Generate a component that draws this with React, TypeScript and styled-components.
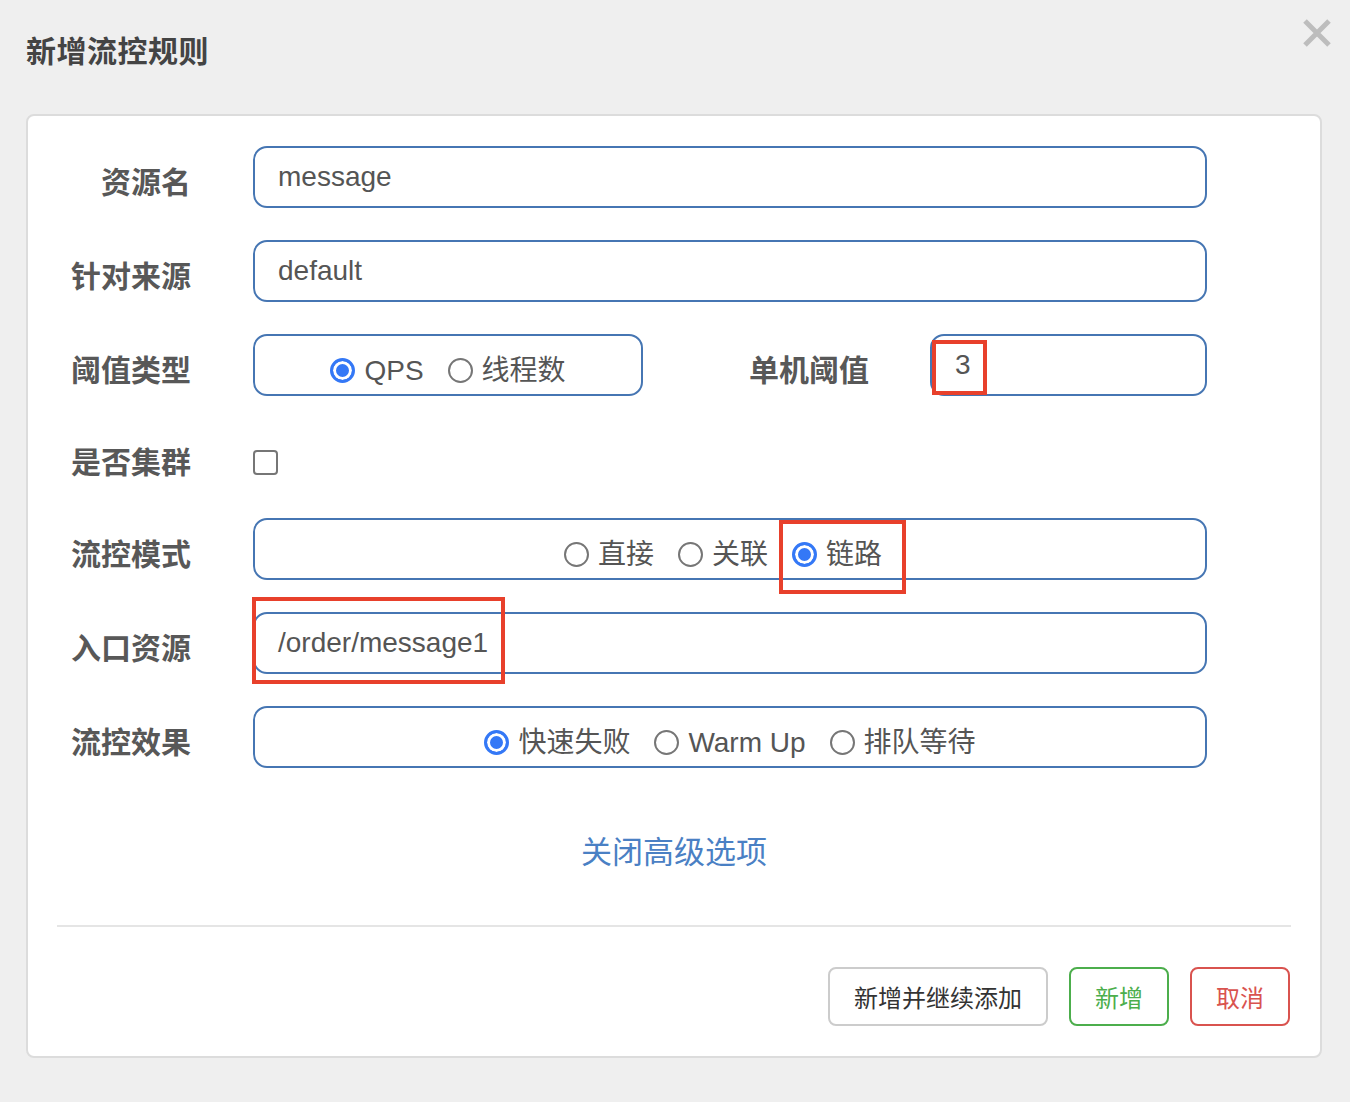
import React from "react";
import styled, { createGlobalStyle } from "styled-components";

const Global = createGlobalStyle`
  html, body { margin: 0; padding: 0; background: #efefef; }
  body { font-family: "Liberation Sans", "Noto Sans CJK SC", sans-serif; color: #555; }
  * { box-sizing: border-box; }
`;

const Page = styled.div`
  width: 1350px;
  height: 1102px;
  padding: 0 28px 0 26px;
`;

const Header = styled.div`
  height: 114px;
  display: flex;
  justify-content: space-between;
  align-items: flex-start;
  margin-right: -10px;
`;

const Title = styled.h1`
  margin: 0;
  padding-top: 29px;
  font-size: 30px;
  line-height: 40px;
  font-weight: 700;
  color: #444;
  font-family: "Noto Sans CJK SC", sans-serif;
  letter-spacing: 0.5px;
`;

const Close = styled.button`
  margin-top: 18px;
  width: 30px;
  height: 30px;
  padding: 0;
  border: 0;
  background: transparent;
  display: flex;
  align-items: center;
  justify-content: center;
`;

const Panel = styled.div`
  width: 1296px;
  height: 944px;
  background: #fff;
  border: 2px solid #dcdcdc;
  border-radius: 8px;
  display: flex;
  flex-direction: column;
`;

const Form = styled.div`
  padding-top: 30px;
  display: flex;
  flex-direction: column;
  gap: 32px;
`;

const Row = styled.div<{ $h?: number; $pt?: number }>`
  display: flex;
  align-items: ${(p) => (p.$pt ? "flex-start" : "center")};
  height: ${(p) => p.$h ?? 62}px;
  padding-top: ${(p) => p.$pt ?? 0}px;
`;

const Label = styled.div<{ $w?: number; $pr?: number }>`
  width: ${(p) => p.$w ?? 225}px;
  flex: none;
  padding-right: ${(p) => p.$pr ?? 62}px;
  text-align: right;
  font-family: "Noto Sans CJK SC", sans-serif;
  font-weight: 700;
  font-size: 30px;
  line-height: 40px;
  color: #585858;
  margin-top: 6px;
`;

const Box = styled.div<{ $w: number; $center?: boolean; $shift?: number }>`
  position: relative;
  width: ${(p) => p.$w}px;
  height: 62px;
  border: 2px solid #4676b3;
  border-radius: 14px;
  display: flex;
  align-items: center;
  justify-content: ${(p) => (p.$center ? "center" : "flex-start")};
  padding: ${(p) => (p.$center ? `10px ${p.$shift ?? 0}px 0 0` : "0 0 0 23px")};
  gap: 24px;
  font-size: 28px;
  color: #555;
`;

const InputText = styled.span`
  font-size: 28px;
  line-height: 34px;
  color: #555;
`;

const Option = styled.label`
  position: relative;
  display: flex;
  align-items: center;
  gap: 9px;
  height: 40px;
  font-size: 28px;
  color: #555;
  white-space: nowrap;
`;

const OptionText = styled.span`
  font-family: "Liberation Sans", "Noto Sans CJK SC", sans-serif;
  line-height: 40px;
  margin-top: 2px;
`;

const Radio = styled.span<{ $on?: boolean }>`
  width: 25px;
  height: 25px;
  border-radius: 50%;
  flex: none;
  background: ${(p) => (p.$on ? "#3478f6" : "#fff")};
  border: ${(p) => (p.$on ? "3px solid #3478f6" : "2px solid #767676")};
  box-shadow: ${(p) => (p.$on ? "inset 0 0 0 3px #fff" : "none")};
`;

const Check = styled.span`
  width: 25px;
  height: 25px;
  border: 2px solid #767676;
  border-radius: 4px;
  margin-top: 16px;
  background: #fff;
`;

const Mark = styled.span<{ $l: number; $t: number; $w: number; $h: number }>`
  position: absolute;
  left: ${(p) => p.$l}px;
  top: ${(p) => p.$t}px;
  width: ${(p) => p.$w}px;
  height: ${(p) => p.$h}px;
  border: 4px solid #e8402b;
  pointer-events: none;
`;

const LinkRow = styled.div`
  margin-top: 62px;
  display: flex;
  justify-content: center;
`;

const Link = styled.a`
  font-family: "Noto Sans CJK SC", sans-serif;
  font-size: 31px;
  line-height: 40px;
  color: #4a80c4;
  text-decoration: none;
`;

const Divider = styled.hr`
  margin: 55px 29px 0 29px;
  border: 0;
  border-top: 2px solid #e5e5e5;
  height: 0;
`;

const Footer = styled.div`
  margin-top: 40px;
  padding-right: 30px;
  display: flex;
  justify-content: flex-end;
  gap: 21px;
`;

const Btn = styled.button<{ $tone: "default" | "green" | "red" }>`
  height: 59px;
  padding: 0 24px;
  min-width: 99px;
  background: #fff;
  border-radius: 8px;
  font-family: "Noto Sans CJK SC", sans-serif;
  font-size: 24px;
  border: 2px solid
    ${(p) => (p.$tone === "green" ? "#4cae4c" : p.$tone === "red" ? "#d9534f" : "#cccccc")};
  color: ${(p) => (p.$tone === "green" ? "#4cae4c" : p.$tone === "red" ? "#d9534f" : "#333")};
`;

export default function App() {
  return (
    <Page>
      <Global />
      <Header>
        <Title>新增流控规则</Title>
        <Close aria-label="close">
          <svg width="28" height="28" viewBox="0 0 28 28">
            <path d="M2 2 L26 26 M26 2 L2 26" stroke="#bdbdbd" strokeWidth="5" />
          </svg>
        </Close>
      </Header>
      <Panel>
        <Form>
          <Row>
            <Label>资源名</Label>
            <Box $w={954}>
              <InputText>message</InputText>
            </Box>
          </Row>
          <Row>
            <Label>针对来源</Label>
            <Box $w={954}>
              <InputText>default</InputText>
            </Box>
          </Row>
          <Row>
            <Label>阈值类型</Label>
            <Box $w={390} $center>
              <Option>
                <Radio $on />
                <OptionText>QPS</OptionText>
              </Option>
              <Option>
                <Radio />
                <OptionText>线程数</OptionText>
              </Option>
            </Box>
            <Label $w={287} $pr={61}>单机阈值</Label>
            <Box $w={277}>
              <InputText>3</InputText>
              <Mark $l={0} $t={4} $w={55} $h={55} />
            </Box>
          </Row>
          <Row $h={58} $pt={6}>
            <Label>是否集群</Label>
            <Check />
          </Row>
          <Row>
            <Label>流控模式</Label>
            <Box $w={954} $center $shift={14}>
              <Option>
                <Radio />
                <OptionText>直接</OptionText>
              </Option>
              <Option>
                <Radio />
                <OptionText>关联</OptionText>
              </Option>
              <Option>
                <Radio $on />
                <OptionText>链路</OptionText>
                <Mark $l={-13} $t={-14} $w={127} $h={74} />
              </Option>
            </Box>
          </Row>
          <Row>
            <Label>入口资源</Label>
            <Box $w={954}>
              <InputText>/order/message1</InputText>
              <Mark $l={-3} $t={-17} $w={253} $h={87} />
            </Box>
          </Row>
          <Row>
            <Label>流控效果</Label>
            <Box $w={954} $center>
              <Option>
                <Radio $on />
                <OptionText>快速失败</OptionText>
              </Option>
              <Option>
                <Radio />
                <OptionText>Warm Up</OptionText>
              </Option>
              <Option>
                <Radio />
                <OptionText>排队等待</OptionText>
              </Option>
            </Box>
          </Row>
        </Form>
        <LinkRow>
          <Link href="#">关闭高级选项</Link>
        </LinkRow>
        <Divider />
        <Footer>
          <Btn $tone="default">新增并继续添加</Btn>
          <Btn $tone="green">新增</Btn>
          <Btn $tone="red">取消</Btn>
        </Footer>
      </Panel>
    </Page>
  );
}
